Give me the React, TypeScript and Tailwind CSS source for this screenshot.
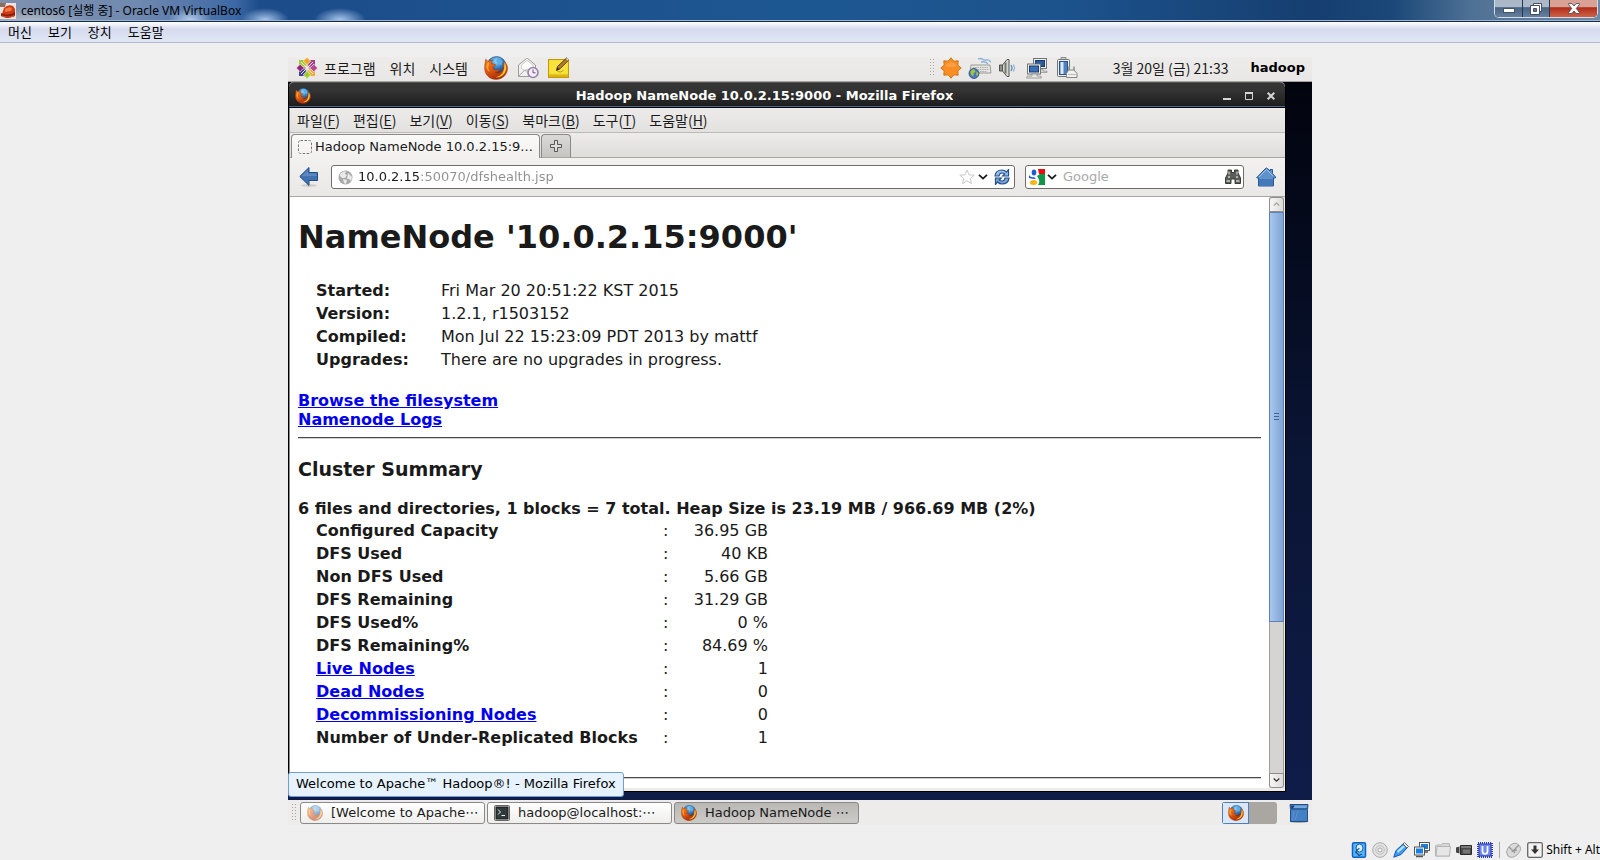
import type { ReactNode } from "react";

const sans = "font-['DejaVu_Sans','Noto_Sans_CJK_KR',sans-serif]";
const gothic = "font-['Noto_Sans_CJK_KR',sans-serif]";

function Firefox({ className }: { className: string }) {
  return (
    <svg viewBox="0 0 24 24" className={className} aria-hidden="true">
      <defs>
        <radialGradient id="ff-globe" cx="0.5" cy="0.25" r="0.7">
          <stop offset="0" stopColor="#9fdcf7" />
          <stop offset="0.5" stopColor="#2f7fc8" />
          <stop offset="1" stopColor="#0c2a6b" />
        </radialGradient>
        <linearGradient id="ff-fox" x1="0" y1="0" x2="0.4" y2="1">
          <stop offset="0" stopColor="#ef7d1a" />
          <stop offset="0.55" stopColor="#e0590f" />
          <stop offset="1" stopColor="#a92f08" />
        </linearGradient>
      </defs>
      <circle cx="12.5" cy="10" r="9.5" fill="url(#ff-globe)" stroke="#1d3f77" strokeWidth="0.6" />
      <path d="M14 2c3 1 3 3 5 4l-1 3-4-1-2-3z" fill="#5bb0e8" />
      <path
        d="M1.6 3.2c1 .4 1.8 1.200 2.400 2.200C5.500 4.500 7 4.300 8.600 4.500 7.500 5.500 7.300 6.600 8 8c1.300.2 2.600 0 3.600.7-.3 1.400-1.600 2-2.900 2.500.2 1.700 1.700 2.800 3.400 2.700 1.500-.2 2.600-1 4-.6-.9 2-2.800 3-5 2.900 3.600 1.700 7.700-.6 8.300-4.500.3-2-.2-3.600-1.100-5 2 .9 3 2.300 3.400 4 .2-1.700-.2-3.600-1.500-5.200C23.200 8 24 11 23.400 14 22.500 19.500 17.700 23.500 12 23.500 5.700 23.500.7 18.700.6 12.500.5 9 1.200 6 1.600 3.200z"
        fill="url(#ff-fox)"
        stroke="#8d2a08"
        strokeWidth="0.4"
      />
      <path d="M20.500 6c2.400 4 2.300 8.500-.5 12-2.200 2.600-5.600 3.800-8.500 3.300 4-.8 7.400-3.500 8.300-7.300.6-2.800.5-5.400.7-8z" fill="#fcc630" />
      <path d="M2.300 10c.2-2 1-3.300 2.500-4 .5 1.500.2 3-.3 4.300-.6 2.200.3 4.200 1.500 5.700-2.400-1.200-3.900-3.300-3.700-6z" fill="#f9a52d" />
    </svg>
  );
}

function CentosLogo() {
  return (
    <svg viewBox="0 0 22 22" className="size-[22px]" aria-hidden="true">
      <rect x="3" y="3" width="7.500" height="7.500" fill="#a4c938" />
      <rect x="11.500" y="3" width="7.500" height="7.500" fill="#a0418d" />
      <rect x="3" y="11.500" width="7.500" height="7.500" fill="#403f92" />
      <rect x="11.500" y="11.500" width="7.500" height="7.500" fill="#f0ac35" />
      <path d="M11 .3l3.800 3.800-3 3V10h-1.600V7.100l-3-3z" fill="#efa724" stroke="#f6f2f4" strokeWidth="0.700" />
      <path d="M21.700 11l-3.800 3.800-3-3H12v-1.600h2.900l3-3z" fill="#b5468f" stroke="#f6f2f4" strokeWidth="0.700" />
      <path d="M11 21.700l-3.800-3.800 3-3V12h1.600v2.900l3 3z" fill="#9ccd2a" stroke="#f6f2f4" strokeWidth="0.700" />
      <path d="M.3 11l3.800-3.800 3 3H10v1.600H7.100l-3 3z" fill="#932279" stroke="#f6f2f4" strokeWidth="0.700" />
      <path d="M5 5l12 12M17 5L5 17" stroke="#f6f2f4" strokeWidth="0.900" />
    </svg>
  );
}

function MailIcon() {
  return (
    <svg viewBox="0 0 22 22" className="size-[22px]" aria-hidden="true">
      <path d="M1.500 8L9.500 1.500h1L18.500 8v11.500h-17z" fill="#f1f1ef" stroke="#9b9b97" />
      <path d="M4.500 8L10 3.500 16 8v4l-6 3-5.500-3.500z" fill="#fff" stroke="#c2c2be" strokeWidth="0.8" />
      <path d="M1.800 19l6-6h4.500l5 5" fill="none" stroke="#a6a6a2" />
      <circle cx="16" cy="15.500" r="5" fill="#f3edf7" stroke="#9a80aa" strokeWidth="1.600" />
      <path d="M16 12.500v3.300h2.500" fill="none" stroke="#6b4d80" strokeWidth="1" />
    </svg>
  );
}

function NoteIcon() {
  return (
    <svg viewBox="0 0 22 22" className="size-[22px]" aria-hidden="true">
      <rect x="0.500" y="2.500" width="20" height="18" fill="#f4dc2c" stroke="#bf9a0b" />
      <path d="M1.500 3.500h18v13h-18z" fill="#f9e23a" />
      <path d="M1 17.500h19v2.500H1z" fill="#d9b414" />
      <path d="M9.500 14.500q3 1.500 6-1" stroke="#b8a11a" fill="none" />
      <path d="M8.500 13.500l1-4L18.500 1l2.300 2L12 11.800z" fill="#b37a2c" stroke="#4d3512" strokeWidth="0.9" />
      <path d="M8.500 13.500l.8-3 2 1.800z" fill="#222" />
      <path d="M18 2l1-1 1.900 1.700-1 1z" fill="#e9d8c0" />
    </svg>
  );
}

function StarburstIcon() {
  return (
    <svg viewBox="0 0 22 22" className="size-[22px]" aria-hidden="true">
      <path
        d="M11 .8l2.800 3.400 4.400-.4-.4 4.400 3.400 2.800-3.400 2.800.4 4.400-4.400-.4L11 21.200l-2.800-3.400-4.400.4.4-4.400L.8 11l3.400-2.800-.4-4.400 4.400.4z"
        fill="#f98f24"
        stroke="#d4730f"
      />
      <path d="M5 8.500q6-6 12 0-6 3-12 0z" fill="#fbb46a" opacity="0.5" />
    </svg>
  );
}

function KeyboardGlobeIcon() {
  return (
    <svg viewBox="0 0 24 22" className="h-[22px] w-6" aria-hidden="true">
      <path d="M10 2c5-2 4 2 8 1s4 2 5 2M13 5q5-1 7 2" fill="none" stroke="#86afd8" strokeWidth="1.300" />
      <path d="M3 8h19l1 8H2z" fill="#e6e6e3" stroke="#999993" />
      <path d="M5 10.500h15M5 12.500h16M12 14.500h7" stroke="#a9a9a4" strokeDasharray="1.500 .8" />
      <circle cx="6" cy="16.500" r="5" fill="#4a79bb" stroke="#254d85" strokeWidth="0.8" />
      <path d="M2.500 14.500q2-3 4-2l1 2-2 2 0 3q-3-1-3-5zM8.500 14.500l2 2-1.500 3q-1.500-2-.5-5z" fill="#a5c63b" />
    </svg>
  );
}

function SpeakerIcon() {
  return (
    <svg viewBox="0 0 20 22" className="h-[22px] w-5" aria-hidden="true">
      <path d="M1.500 8h3v6h-3z" fill="#8e9089" stroke="#4f514b" />
      <path d="M4.500 8L9 2.500h2v17H9L4.500 14z" fill="#d3d5cf" stroke="#555751" />
      <path d="M7.500 5.500v11" stroke="#777a72" strokeWidth="2" />
      <path d="M13 8q2 3 0 6" fill="none" stroke="#5a8cc4" strokeWidth="1.300" />
      <path d="M15.500 7.500q2 3.500 0 7" fill="none" stroke="#7ea8d8" />
    </svg>
  );
}

function NetworkIcon() {
  return (
    <svg viewBox="0 0 22 22" className="size-[22px]" aria-hidden="true">
      <rect x="7.500" y="1.500" width="13" height="10" fill="#eeeeec" stroke="#73756f" />
      <rect x="9.500" y="3.500" width="9" height="6" fill="#2b5b9f" stroke="#173b70" />
      <path d="M13 12h4v2h4v1.500h-8z" fill="#d6d7d3" stroke="#8c8e88" strokeWidth="0.7" />
      <rect x="1.500" y="7" width="13" height="10" fill="#eeeeec" stroke="#73756f" />
      <rect x="3.500" y="9" width="9" height="6" fill="#396fb4" stroke="#173b70" />
      <path d="M6 17h5v2h3.500l1 2H.500l1-2H6z" fill="#e5e6e2" stroke="#8c8e88" strokeWidth="0.8" />
    </svg>
  );
}

function BatteryIcon() {
  return (
    <svg viewBox="0 0 22 22" className="size-[22px]" aria-hidden="true">
      <path d="M5 .5h5v2H5z" fill="#d3d4d0" stroke="#73756f" strokeWidth="0.8" />
      <rect x="1.500" y="2.500" width="12" height="17" rx="1" fill="#eeeeec" stroke="#73756f" />
      <rect x="3.500" y="4.500" width="8" height="13" fill="#4f80bf" stroke="#2b538b" />
      <path d="M6 5v12" stroke="#dbe8f7" strokeWidth="3" />
      <path d="M13 9.500v4M18 9.500v4" stroke="#8f918b" strokeWidth="1.500" />
      <path d="M10.500 20.500v-4l2-3.500H18l3 3.500v4z" fill="#f1f1ef" stroke="#84867f" />
      <path d="M12 17.500h8" stroke="#bbb" />
    </svg>
  );
}

function Chevron({ className = "w-[10px]" }: { className?: string }) {
  return (
    <svg viewBox="0 0 10 6" className={className} aria-hidden="true">
      <path d="M1 0.800l4 3.800 4-3.800" fill="none" stroke="currentColor" strokeWidth="1.800" />
    </svg>
  );
}

function Grip() {
  return (
    <svg viewBox="0 0 6 18" className="h-[18px] w-[6px] shrink-0" aria-hidden="true">
      {[0, 1, 2, 3, 4, 5].map((row) => (
        <path key={row} d={`M0 ${row * 3 + 0.5}h1M3 ${row * 3 + 0.5}h1`} stroke="#a9a7a4" />
      ))}
    </svg>
  );
}

function HostWindowBar() {
  return (
    <header className="flex h-[22px] items-start justify-between border-b border-[#132b4c] bg-[linear-gradient(0deg,#9fb4cc_1px,transparent_1px),radial-gradient(ellipse_22px_12px_at_190px_20px,#b4cdee,transparent),radial-gradient(ellipse_24px_12px_at_265px_20px,#a9c7ee,transparent),radial-gradient(ellipse_26px_12px_at_340px_20px,#a9c7ee,transparent),radial-gradient(ellipse_60px_14px_at_30px_22px,#b5bdc8,transparent),linear-gradient(90deg,#7e91ae_0px,#6f89b0_140px,#3d68a5_235px,#1c4c8a_260px,#1d5791_50%,#1c538d_66%,#163e70_82%,#1a4778_87%,#4f7195_92%,#6d89a5_100%)]">
      <h1 className="flex h-[21px] items-center gap-[5px] font-['Noto_Sans','Noto_Sans_CJK_KR',sans-serif] text-[12px] leading-5 text-black">
        <svg viewBox="0 0 16 16" className="size-4" aria-hidden="true">
          <rect width="16" height="16" fill="#efe3dd" />
          <path d="M0 0h6l-1 4H0z" fill="#8b6d62" />
          <path d="M4 5q4-4 9-2l2 3v7q-5 3-11 1L2 11z" fill="#cf3a14" />
          <path d="M5 6q4-3 7-1l-1 3-6 1z" fill="#ef7a45" />
          <path d="M1 10q6 4 14-1v3q-7 5-14 1z" fill="#8f1c08" />
          <path d="M2 12q5 3 12 0v2H3z" fill="#d0532c" />
        </svg>
        centos6 [실행 중] - Oracle VM VirtualBox
      </h1>
      <div className="mr-[2px] flex h-[18px] overflow-hidden rounded-b-[5px] border border-t-0 border-[#d3dbe5] bg-[#27384f]">
        <button aria-label="최소화" className="flex w-7 items-end justify-center border-r border-[#26384f] bg-linear-to-b from-[#aab8c7] from-40% via-[#4a6483] via-45% to-[#6580a0] pb-1">
          <svg viewBox="0 0 12 5" className="w-3" aria-hidden="true">
            <rect x="0.500" y="0.500" width="11" height="4" fill="#fff" stroke="#4a5461" />
          </svg>
        </button>
        <button aria-label="이전 크기로" className="flex w-[27px] items-center justify-center border-r border-[#26384f] bg-linear-to-b from-[#aab8c7] from-40% via-[#4a6483] via-45% to-[#6580a0]">
          <svg viewBox="0 0 12 12" className="w-3" aria-hidden="true">
            <path d="M3.500.5h8v8h-8z" fill="#fff" stroke="#454f5f" />
            <path d="M.5 2.500h9v9h-9z" fill="#fff" stroke="#454f5f" />
            <path d="M3.500 5.500h3v3h-3z" fill="#5f7791" stroke="#454f5f" />
          </svg>
        </button>
        <button aria-label="닫기" className="flex w-[47px] items-center justify-center bg-linear-to-b from-[#d9a196] from-40% via-[#b02c1a] via-45% to-[#cf6146]">
          <svg viewBox="0 0 12 11" className="w-3" aria-hidden="true">
            <path d="M.6.600h3.400L6 3 8 .6h3.400v1L8.300 5.500l3.100 3.900v1H8L6 8l-2 2.400H.6v-1l3.100-3.900L.6 1.600z" fill="#fff" stroke="#4f4655" strokeWidth="0.900" />
          </svg>
        </button>
      </div>
    </header>
  );
}

function HostMenu() {
  return (
    <nav className={`flex h-[21px] items-center gap-4 border-b border-[#b3b9cf] bg-linear-to-b from-white from-0% via-[#d5dbed] via-35% to-[#e2e7f6] px-2 text-[13px] leading-4 text-black ${gothic}`}>
      {["머신", "보기", "장치", "도움말"].map((label) => (
        <button key={label}>{label}</button>
      ))}
    </nav>
  );
}

function GuestPanel() {
  return (
    <div className={`flex h-[25px] items-center border-b border-[#a5a39f] bg-linear-to-b from-[#edeceb] to-[#e9e7e5] pr-[7px] pb-[2px] pl-2 text-[14px] leading-5 text-[#1a1a1a] ${gothic}`}>
      <CentosLogo />
      <nav className="ml-[6px] flex gap-[14px]">
        <button>프로그램</button>
        <button>위치</button>
        <button>시스템</button>
      </nav>
      <div className="ml-4 flex items-center gap-[9px]">
        <button aria-label="Firefox" className="flex">
          <Firefox className="size-6" />
        </button>
        <button aria-label="메일" className="flex">
          <MailIcon />
        </button>
        <button aria-label="메모" className="flex">
          <NoteIcon />
        </button>
      </div>
      <div className="ml-auto flex items-center">
        <Grip />
        <div className="ml-1 flex items-center gap-[6px]">
          <StarburstIcon />
          <KeyboardGlobeIcon />
          <SpeakerIcon />
        </div>
        <div className="ml-2 flex items-center gap-2">
          <NetworkIcon />
          <BatteryIcon />
        </div>
        <time className="ml-[35px]">3월 20일 (금) 21:33</time>
        <span className={`ml-[22px] text-[13px] font-bold text-black ${sans}`}>hadoop</span>
      </div>
    </div>
  );
}

function FirefoxTitle() {
  return (
    <div className={`grid h-[26px] grid-cols-[1fr_auto_1fr] items-center rounded-t-[5px] border-t border-b border-t-[#555] border-b-black bg-linear-to-b from-[#343434] from-30% to-[#1c1c1c] px-[6px] pt-px shadow-[inset_0_-1px_0_#4a678f] ${sans}`}>
      <Firefox className="size-4" />
      <h2 className="pr-[45px] text-[13px] leading-5 font-bold text-white">Hadoop NameNode 10.0.2.15:9000 - Mozilla Firefox</h2>
      <div className="flex justify-end gap-[14px] pr-1 text-[#d5d5d5]">
        <button aria-label="최소화" className="flex">
          <svg viewBox="0 0 8 8" className="size-2" aria-hidden="true"><path d="M0 7h8" stroke="currentColor" strokeWidth="2" /></svg>
        </button>
        <button aria-label="최대화" className="flex">
          <svg viewBox="0 0 8 8" className="size-2" aria-hidden="true"><path d="M.5 1v6.500h7V1z" fill="none" stroke="currentColor" /><path d="M0 1h8" stroke="currentColor" strokeWidth="2" /></svg>
        </button>
        <button aria-label="닫기" className="flex">
          <svg viewBox="0 0 8 8" className="size-2" aria-hidden="true"><path d="M.7.700l6.600 6.600M7.300.7L.7 7.300" stroke="currentColor" strokeWidth="2" /></svg>
        </button>
      </div>
    </div>
  );
}

const firefoxMenu = [
  ["파일", "F"],
  ["편집", "E"],
  ["보기", "V"],
  ["이동", "S"],
  ["북마크", "B"],
  ["도구", "T"],
  ["도움말", "H"],
];

function FirefoxChrome() {
  return (
    <>
      <nav className={`flex h-[25px] items-center gap-[13px] border-b border-[#bcbab7] bg-linear-to-b from-[#edeceb] to-[#e3e1df] px-[7px] text-[14px] leading-5 text-[#1a1a1a] ${gothic}`}>
        {firefoxMenu.map(([label, key]) => (
          <button key={key}>
            {label}(<span className="underline underline-offset-2">{key}</span>)
          </button>
        ))}
      </nav>
      <div className={`flex h-[25px] items-end gap-px border-b border-[#a9a7a4] bg-linear-to-b from-[#edeceb] to-[#dfddda] pl-px text-[13px] leading-5 text-[#1a1a1a] ${sans}`}>
        <button className="-mb-px flex h-6 w-[249px] items-center gap-[3px] rounded-t-[4px] border border-b-0 border-[#8b8986] bg-linear-to-b from-[#f9f9f8] to-[#f2f1f0] pl-[6px] whitespace-nowrap">
          <svg viewBox="0 0 14 14" className="size-[14px] shrink-0" aria-hidden="true">
            <rect x="0.500" y="0.500" width="13" height="13" rx="2" fill="none" stroke="#777" strokeDasharray="2.500 1.500" />
          </svg>
          Hadoop NameNode 10.0.2.15:9...
        </button>
        <button aria-label="새 탭" className="-mb-px flex h-6 w-[30px] items-center justify-center rounded-t-[4px] border border-[#8b8986] border-b-[#a9a7a4] bg-linear-to-b from-[#dcdad8] to-[#c6c4c1]">
          <svg viewBox="0 0 12 12" className="size-3" aria-hidden="true">
            <path d="M4.500.500h3v4h4v3h-4v4h-3v-4h-4v-3h4z" fill="#e1e0de" stroke="#555" />
          </svg>
        </button>
      </div>
      <div className={`flex h-[39px] items-center border-b border-[#a9a7a4] bg-linear-to-b from-[#f2f1f0] to-[#e9e8e6] pr-[9px] pl-[9px] text-[13px] leading-5 ${sans}`}>
        <button aria-label="뒤로" className="flex">
          <svg viewBox="0 0 20 22" className="h-[22px] w-5" aria-hidden="true">
            <ellipse cx="10" cy="19.500" rx="8" ry="1.500" fill="#cfcecb" />
            <path d="M.8 10.500L10 1.500V6.500h8.500v8H10v5z" fill="#3f70b0" stroke="#244c85" />
            <path d="M2.500 10.300L9 4v3.500h8.500v2.500z" fill="#6d97cb" opacity="0.6" />
          </svg>
        </button>
        <div className="ml-3 flex h-6 min-w-0 flex-1 items-center rounded-[3px] border border-[#6f6d69] bg-white pr-1 pl-[6px]">
          <svg viewBox="0 0 15 15" className="size-[15px] shrink-0" aria-hidden="true">
            <circle cx="7.500" cy="7.500" r="7" fill="#a9a9a9" />
            <path d="M2 4q3-3 6-3l-1 3 2 1-2 3-3 0-2-2zM10 3l4 4-1 4-2-2-2 0zM5 9l4 1-1 4-2-1z" fill="#e9e9e9" />
          </svg>
          <input
            aria-label="주소"
            readOnly
            defaultValue="10.0.2.15:50070/dfshealth.jsp"
            className="ml-[5px] min-w-0 flex-1 bg-linear-to-r from-[#1a1a1a] from-[61px] to-[#8e8e8e] to-[61px] bg-clip-text text-transparent outline-none"
          />
          <button aria-label="북마크 추가" className="flex">
            <svg viewBox="0 0 16 16" className="size-4" aria-hidden="true">
              <path d="M8 1l2 4.800 5.200.4-4 3.400 1.300 5L8 11.900l-4.500 2.700 1.300-5-4-3.400L6 5.800z" fill="#fff" stroke="#c9c9c9" />
            </svg>
          </button>
          <button aria-label="방문 기록" className="ml-[3px] flex text-[#1a1a1a]">
            <Chevron />
          </button>
          <button aria-label="새로 고침" className="ml-[6px] flex">
            <svg viewBox="0 0 16 16" className="size-4" aria-hidden="true">
              <path d="M1 7Q1.500 1 8 1q2.500 0 4.500 2l2-2.500V7H8.700l2-2Q9.500 4 8 4 5.500 4 5 7z" fill="#9bbce2" stroke="#234f8f" strokeWidth="1.200" />
              <path d="M15 9q-.5 6-7 6-2.500 0-4.500-2l-2 2.500V9h5.800l-2 2q1.200 1 2.700 1 2.500 0 3-3z" fill="#7ba4d6" stroke="#234f8f" strokeWidth="1.200" />
            </svg>
          </button>
        </div>
        <div className="ml-[10px] flex h-6 w-[219px] items-center rounded-[3px] border border-[#6f6d69] bg-white pr-[2px] pl-[3px]">
          <button aria-label="검색 엔진" className="flex items-center gap-[2px] text-[#1a1a1a]">
            <svg viewBox="0 0 16 16" className="size-4" aria-hidden="true">
              <path fill="#fff" d="M0 0h16v16H0z" />
              <path fill="#e80c0c" d="M9 0h7v5h-6z" />
              <path fill="#0f9648" d="M8 7l3-2h5v11H9q3-4-1-9z" />
              <ellipse cx="4.500" cy="13.500" rx="3.600" ry="2.500" fill="#f6b513" />
              <ellipse cx="5" cy="3.500" rx="2.300" ry="3" fill="#1c5bd1" />
              <path d="M0 6q2 3 5 2l2 2q-4 0-7-1z" fill="#1c5bd1" />
            </svg>
            <Chevron />
          </button>
          <input aria-label="Google 검색" placeholder="Google" className="ml-[6px] min-w-0 flex-1 text-[#1a1a1a] outline-none placeholder:text-[#a9a9a9]" />
          <button aria-label="검색" className="flex">
            <svg viewBox="0 0 16 16" className="size-4" aria-hidden="true">
              <path d="M3 1h3.500v2.500h3V1H13v3l2.500 5v5.500H10V10H6v4.500H.5V9L3 4z" fill="#5b5d5a" stroke="#2d2e2c" strokeWidth="0.900" />
              <path d="M4 2.500v3M12 2.500v3M1.500 12h3.500M11 12h3.500M3 8h2M11 8h2" stroke="#c9cbc7" strokeWidth="1.300" />
            </svg>
          </button>
        </div>
        <button aria-label="홈" className="ml-3 flex">
          <svg viewBox="0 0 20 20" className="size-5" aria-hidden="true">
            <path d="M.8 10.500L9 2l1.500-1 1.500 1 2 2V2.500h2.500v4L19.500 10v1H17.500v8h-15v-8H.8z" fill="#5f92cb" stroke="#2a5a98" />
            <path d="M3 12h14v6.500H3z" fill="#4379b8" />
            <path d="M3 10l7.500-7.500L17 9" fill="none" stroke="#a9c8ea" strokeWidth="0.900" />
          </svg>
        </button>
      </div>
    </>
  );
}

const facts = [
  ["Started:", "Fri Mar 20 20:51:22 KST 2015"],
  ["Version:", "1.2.1, r1503152"],
  ["Compiled:", "Mon Jul 22 15:23:09 PDT 2013 by mattf"],
  ["Upgrades:", "There are no upgrades in progress."],
];

const summary: { label: string; value: string; link?: boolean }[] = [
  { label: "Configured Capacity", value: "36.95 GB" },
  { label: "DFS Used", value: "40 KB" },
  { label: "Non DFS Used", value: "5.66 GB" },
  { label: "DFS Remaining", value: "31.29 GB" },
  { label: "DFS Used%", value: "0 %" },
  { label: "DFS Remaining%", value: "84.69 %" },
  { label: "Live Nodes", value: "1", link: true },
  { label: "Dead Nodes", value: "0", link: true },
  { label: "Decommissioning Nodes", value: "0", link: true },
  { label: "Number of Under-Replicated Blocks", value: "1" },
];

function PageLink({ children }: { children: ReactNode }) {
  return (
    <a href="#" className="font-bold text-[#0000ee] underline">
      {children}
    </a>
  );
}

function NameNodePage() {
  return (
    <main className={`min-w-0 flex-1 bg-white px-2 pt-[22px] pb-[9px] text-[16px] leading-[19px] text-[#1a1a1a] ${sans}`}>
      <h1 className="text-[32px] leading-[37px] font-bold">NameNode '10.0.2.15:9000'</h1>
      <table className="mt-[23px] ml-[18px] border-collapse">
        <tbody>
          {facts.map(([label, value]) => (
            <tr key={label} className="h-[23px]">
              <th scope="row" className="w-[125px] p-0 text-left font-bold">{label}</th>
              <td className="p-0">{value}</td>
            </tr>
          ))}
        </tbody>
      </table>
      <div className="mt-5 flex flex-col items-start">
        <PageLink>Browse the filesystem</PageLink>
        <PageLink>Namenode Logs</PageLink>
      </div>
      <hr className="mt-2 h-[2px] border-t border-b border-t-[#4a4a4a] border-b-[#d0d0cd]" />
      <h3 className="mt-[19px] text-[19px] leading-[22px] font-bold">Cluster Summary</h3>
      <p className="mt-[19px] font-bold">6 files and directories, 1 blocks = 7 total. Heap Size is 23.19 MB / 966.69 MB (2%)</p>
      <table className="mt-px ml-[18px] border-collapse">
        <tbody>
          {summary.map(({ label, value, link }) => (
            <tr key={label} className="h-[23px]">
              <th scope="row" className="w-[347px] p-0 text-left font-bold">{link ? <PageLink>{label}</PageLink> : label}</th>
              <td className="w-[105px] p-0">
                <span className="flex justify-between">
                  <span>:</span>
                  <span>{value}</span>
                </span>
              </td>
            </tr>
          ))}
        </tbody>
      </table>
      <hr className="mt-7 h-[2px] border-t border-b border-t-[#4a4a4a] border-b-[#d0d0cd]" />
    </main>
  );
}

function ScrollBar() {
  const button = "flex h-[15px] shrink-0 items-center justify-center border border-[#8f8d8a] bg-linear-to-r from-[#f7f7f6] to-[#dddbd9]";
  return (
    <div className="flex w-[15px] flex-col bg-[#d5d4d2]">
      <button aria-label="위로" className={`${button} rounded-t-[3px] text-[#a5a5a5]`}>
        <Chevron className="w-[7px] rotate-180" />
      </button>
      <div className="flex flex-1 flex-col border-x border-[#a09e9b]">
        <div className="-mx-px flex h-[73%] items-center justify-center border border-[#5b82b6] bg-linear-to-r from-[#a9c8ee] via-[#93b5e0] to-[#7fa4d6]">
          <svg viewBox="0 0 5 7" className="w-[5px]" aria-hidden="true">
            <path d="M0 .5h5M0 3.500h5M0 6.500h5" stroke="#41659b" />
          </svg>
        </div>
      </div>
      <button aria-label="아래로" className={`${button} rounded-b-[3px] text-[#333]`}>
        <Chevron className="w-[7px]" />
      </button>
    </div>
  );
}

function TaskButton({ icon, label, active = false }: { icon: ReactNode; label: string; active?: boolean }) {
  return (
    <button
      className={`flex h-[22px] w-[185px] items-center rounded-[3px] border border-[#8b8986] bg-linear-to-b pl-[6px] whitespace-nowrap ${
        active ? "from-[#bab8b5] to-[#cdcbc8]" : "from-white to-[#efeeed]"
      }`}
    >
      {icon}
      <span className="ml-2">{label}</span>
    </button>
  );
}

function TaskBar() {
  return (
    <footer className={`relative flex h-[25px] items-center bg-[#edeceb] pr-[3px] pl-1 text-[13px] leading-5 text-[#1a1a1a] ${sans}`}>
      <Grip />
      <div className="ml-[2px] flex gap-[2px]">
        <TaskButton icon={<Firefox className="size-4 opacity-50" />} label="[Welcome to Apache⋯" />
        <TaskButton
          icon={
            <svg viewBox="0 0 16 16" className="size-4" aria-hidden="true">
              <rect x="0.500" y="0.500" width="15" height="15" rx="1" fill="#d0d2ce" stroke="#666" />
              <rect x="2" y="2" width="12" height="12" fill="#2f3a3b" stroke="#111" strokeWidth="0.800" />
              <path d="M4 4.500L6.500 7 4 9.500M7.500 10.500H11" fill="none" stroke="#eee" />
            </svg>
          }
          label="hadoop@localhost:⋯"
        />
        <TaskButton icon={<Firefox className="size-4" />} label="Hadoop NameNode ⋯" active />
      </div>
      <div className="ml-auto flex h-[22px] w-[55px] overflow-hidden rounded-[3px] bg-[#aaa6a2]">
        <button aria-label="작업 공간 1" className="flex w-[27px] items-center justify-center border border-[#4d7fbd] bg-[#dbe7f6]">
          <Firefox className="size-4" />
        </button>
        <button aria-label="작업 공간 2" className="flex-1" />
      </div>
      <button aria-label="휴지통" className="ml-3 flex">
        <svg viewBox="0 0 20 20" className="size-5" aria-hidden="true">
          <ellipse cx="10" cy="18.500" rx="9.500" ry="1.500" fill="#a9a7a4" />
          <path d="M1 1.500h18l-.5 5v12h-17v-12z" fill="#4680c4" stroke="#234d86" />
          <path d="M2 2.500h16l-.5 2.500h-15z" fill="#79a6da" />
          <path d="M2 2.500h3.500L4 5.500H2.300z" fill="#1c3f70" />
          <path d="M2 6h16" stroke="#1d457c" />
          <path d="M5 8l-1.500 9M9 8l-3 9" stroke="#5d93d1" />
        </svg>
      </button>
      <div role="tooltip" className="absolute bottom-[28px] left-0 rounded-[3px] border border-[#6f9ed6] bg-[#e6f2fd] px-[7px] pt-px pb-[2px] text-black whitespace-nowrap">
        Welcome to Apache™ Hadoop®! - Mozilla Firefox
      </div>
    </footer>
  );
}

function StatusBar() {
  return (
    <footer className="flex items-center justify-end pb-[2px] font-['Noto_Sans','Noto_Sans_CJK_KR',sans-serif] text-[12px] leading-4 text-black">
      <div className="flex shrink-0 items-center gap-[5px]">
        <svg viewBox="0 0 16 16" className="size-4" aria-label="하드 디스크">
          <rect x="1.500" y="0.800" width="13" height="14.400" rx="1.500" fill="#5bb4f2" stroke="#0d62c4" strokeWidth="1.500" />
          <ellipse cx="8.500" cy="6" rx="3.500" ry="4" fill="#d8effd" stroke="#1562ab" />
          <path d="M8.500 6.500Q6 7 4.500 11M5 10l3 3.500 3-1.500" fill="none" stroke="#124f91" strokeWidth="1.200" />
        </svg>
        <svg viewBox="0 0 16 16" className="size-4" aria-label="광학 드라이브">
          <circle cx="8" cy="8" r="7.300" fill="#e3e3e3" stroke="#aaa" />
          <circle cx="8" cy="8" r="4.300" fill="none" stroke="#c0c0c0" />
          <circle cx="8" cy="8" r="2" fill="#fff" stroke="#a5a5a5" />
        </svg>
        <svg viewBox="0 0 16 16" className="size-4" aria-label="USB">
          <path d="M.8 15.200L3 8.500 10 2l4 4L8 12.500z" fill="#3d9bea" stroke="#1358b5" />
          <path d="M4 9l6-5.500 2 1.500-7 6z" fill="#b5e1fd" />
          <path d="M10 2l1.500-1.500 4 4L14 6z" fill="#eee" stroke="#666" />
        </svg>
        <svg viewBox="0 0 16 16" className="size-4" aria-label="네트워크">
          <rect x="5.500" y="0.500" width="10" height="8" fill="#fff" stroke="#555" />
          <rect x="7" y="2" width="7" height="5" fill="#1a7fe2" />
          <path d="M9 10h5" stroke="#555" strokeWidth="1.500" />
          <rect x="0.500" y="5" width="10" height="8" fill="#fff" stroke="#555" />
          <rect x="2" y="6.500" width="7" height="5" fill="#1a7fe2" />
          <path d="M2 14.500h7" stroke="#555" strokeWidth="1.500" />
        </svg>
        <svg viewBox="0 0 16 16" className="size-4" aria-label="공유 폴더">
          <path d="M.5 14V4l1-1h5l1-1.500h7V14z" fill="#d9d9d9" stroke="#b5b5b5" />
          <path d="M1 14L2 4.500h13.500L14.500 14z" fill="#e6e6e6" stroke="#b5b5b5" />
        </svg>
        <svg viewBox="0 0 16 16" className="size-4" aria-label="비디오 캡처">
          <path d="M0 5.500l3.500-1v7L0 10.500z" fill="#444" />
          <path d="M4.500 3.500h11v9h-11z" fill="#4a4a4a" stroke="#2b2b2b" />
          <path d="M5 5h10" stroke="#aaa" />
          <path d="M7 7.500h7v4H7z" fill="#777" />
        </svg>
        <svg viewBox="0 0 16 16" className="size-4" aria-label="가상화">
          <rect x="1" y="1" width="14" height="14" fill="none" stroke="#2e3fb0" strokeWidth="2" strokeDasharray="1 1" />
          <rect x="2" y="2" width="12" height="12" fill="#6f8ae8" stroke="#2b3bb0" />
          <path d="M5.500 4v5q0 3 2.500 3t2.500-3V4" fill="none" stroke="#fff" strokeWidth="1.700" />
        </svg>
        <span className="ml-[1px] h-4 w-px bg-[#a9a9a9]" />
        <svg viewBox="0 0 16 16" className="ml-[1px] size-4" aria-label="마우스 통합">
          <path d="M2 6Q6 0 11 1.500l3 3Q16 8 11 13q-5 4-9 1-3-4 0-8z" fill="#dadada" stroke="#a5a5a5" />
          <path d="M3 5l6 6M13 3L7 9l4-1" fill="none" stroke="#999" strokeWidth="1.300" />
        </svg>
        <svg viewBox="0 0 16 16" className="size-4" aria-label="키보드 캡처">
          <rect x="0.700" y="0.700" width="14.600" height="14.600" rx="1.500" fill="#f2f2f2" stroke="#666" strokeWidth="1.300" />
          <path d="M6.500 3.500h3v4H12L8 12 4 7.500h2.500z" fill="#333" />
        </svg>
      </div>
      <span className="ml-[3px] shrink-0 whitespace-nowrap">Shift + Alt</span>
    </footer>
  );
}

export default function App() {
  return (
    <div className="flex min-h-screen flex-col bg-[#efefef]">
      <HostWindowBar />
      <HostMenu />
      <div className="mx-auto mt-[14px] w-full max-w-5xl">
        <GuestPanel />
        <div className="bg-linear-to-b from-[#02040d] via-[#0a1433] to-[#0f1c48] pr-[26px] pb-2">
          <section className="rounded-t-[5px] border border-t-0 border-black bg-[#edeceb]">
            <FirefoxTitle />
            <div className="border-l border-[#8a8a8a]">
              <FirefoxChrome />
              <div className="flex pr-px pb-[3px]">
                <NameNodePage />
                <ScrollBar />
              </div>
            </div>
          </section>
        </div>
        <TaskBar />
      </div>
      <div className="mt-auto">
        <StatusBar />
      </div>
    </div>
  );
}
